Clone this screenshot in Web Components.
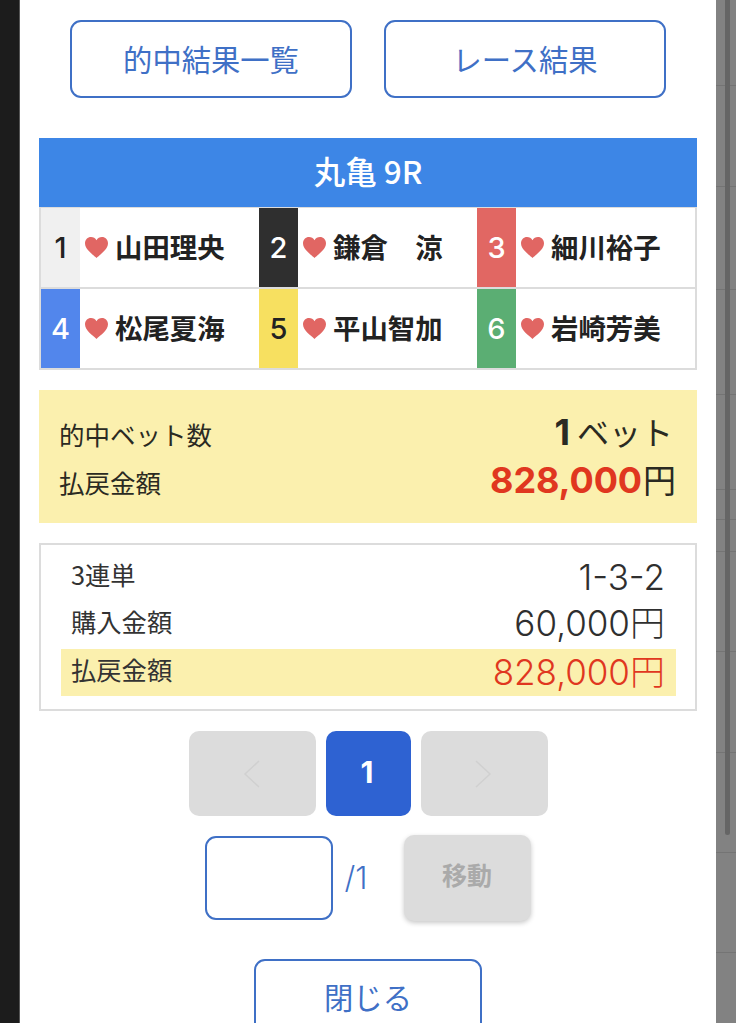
<!DOCTYPE html>
<html lang="ja">
<head>
<meta charset="utf-8">
<title>的中結果</title>
<style>
  html, body { margin: 0; height: 100%; overflow: hidden; background: #1c1c1c; }
  body { font-family: "Noto Sans CJK JP", "Liberation Sans", sans-serif; }
</style>
</head>
<body>
<result-screen>
  <div slot="modal">
    <top-actions></top-actions>
    <race-table venue="丸亀 9R"></race-table>
    <hit-summary bets="1" payout="828,000"></hit-summary>
    <bet-detail type="3連単" combo="1-3-2" stake="60,000" payout="828,000"></bet-detail>
    <page-nav></page-nav>
    <page-jump></page-jump>
    <close-row></close-row>
  </div>
</result-screen>

<script>
const FONT = '"Noto Sans CJK JP", "Liberation Sans", sans-serif';

class ResultScreen extends HTMLElement {
  constructor() {
    super();
    this.attachShadow({ mode: "open" });
    // faint table lines showing through the overlay on the right
    const lines = [86, 101, 103, 105, 95, 30, 32, 100, 101, 100, 100]
      .map((h) => `<i style="height:${h - 1}px"></i>`).join("");
    this.shadowRoot.innerHTML = `
      <style>
        :host { display: flex; width: 736px; height: 1023px; overflow: hidden; background: #1c1c1c; }
        .left { width: 20px; flex: none; background: #1c1c1c; border-right: 1px solid #555; box-sizing: border-box; }
        .modal { width: 696px; flex: none; background: #fff; box-sizing: border-box; padding: 20px 19px 0; }
        .right { width: 20px; flex: none; position: relative; background: #828282; display: flex; flex-direction: column; }
        .right i { display: block; flex: none; border-bottom: 1px solid #747474; }
        .thumb { position: absolute; left: 9px; top: 0; width: 5px; height: 835px; border-radius: 0 0 3px 3px; background: #656565; }
      </style>
      <div class="left"></div>
      <div class="modal"><slot name="modal"></slot></div>
      <div class="right">${lines}<div class="thumb"></div></div>`;
  }
}

class OutlineButton extends HTMLElement {
  constructor() {
    super();
    this.attachShadow({ mode: "open" });
    this.shadowRoot.innerHTML = `
      <style>
        :host {
          display: flex; align-items: center; justify-content: center; box-sizing: border-box;
          width: 282.5px; height: 78px; padding-bottom: 3px; border: 2px solid #3f70c6; border-radius: 11px;
          background: #fff; color: #3f70c6; font: 400 29.3px ${FONT};
        }
      </style>
      <slot></slot>`;
  }
}

class TopActions extends HTMLElement {
  constructor() {
    super();
    this.attachShadow({ mode: "open" });
    this.shadowRoot.innerHTML = `
      <style>:host { display: flex; justify-content: center; gap: 31.5px; }</style>
      <outline-button>的中結果一覧</outline-button>
      <outline-button>レース結果</outline-button>`;
  }
}

class RacerCell extends HTMLElement {
  constructor() {
    super();
    this.attachShadow({ mode: "open" });
    const bg = this.getAttribute("bg");
    const fg = this.getAttribute("fg");
    this.shadowRoot.innerHTML = `
      <style>
        :host { display: flex; align-items: center; background: #fff; height: 79px; }
        .num {
          width: 39px; height: 100%; flex: none; display: flex; align-items: center; justify-content: center;
          background: ${bg}; color: ${fg}; font: 500 29px "Inter", sans-serif;
        }
        svg { width: 23px; height: 21px; margin: 0 7px 0 5px; flex: none; }
        .name { font: 700 27.4px ${FONT}; color: #222; white-space: pre; line-height: 1; padding-bottom: 2px; }
      </style>
      <div class="num">${this.getAttribute("no")}</div>
      <svg viewBox="0 0 23 21"><path fill="#e16663" d="M11.5 21C8 17.6 0 12.6 0 6.3 0 2.6 2.7 0 6 0c2.400 0 4.300 1.200 5.500 3.200C12.700 1.200 14.600 0 17 0c3.300 0 6 2.600 6 6.300 0 6.300-8 11.300-11.500 14.700z"/></svg>
      <span class="name"><slot></slot></span>`;
  }
}

class RaceTable extends HTMLElement {
  constructor() {
    super();
    this.attachShadow({ mode: "open" });
    this.shadowRoot.innerHTML = `
      <style>
        :host { display: block; margin-top: 40px; }
        .head {
          height: 69px; box-sizing: border-box; padding-bottom: 6px; display: flex; align-items: center; justify-content: center;
          background: #3d86e6; color: #fff; font: 500 31.5px ${FONT};
        }
        .grid {
          display: grid; grid-template-columns: repeat(3, 1fr); row-gap: 2px; box-sizing: border-box;
          border: 2px solid #dcdcdc; border-top-width: 1px; background: #dcdcdc;
        }
      </style>
      <div class="head">${this.getAttribute("venue")}</div>
      <div class="grid">
        <racer-cell no="1" bg="#f0f0f0" fg="#222">山田理央</racer-cell>
        <racer-cell no="2" bg="#2f2f2f" fg="#fff">鎌倉　涼</racer-cell>
        <racer-cell no="3" bg="#e16763" fg="#fff">細川裕子</racer-cell>
        <racer-cell no="4" bg="#5286ec" fg="#fff">松尾夏海</racer-cell>
        <racer-cell no="5" bg="#f7e060" fg="#222">平山智加</racer-cell>
        <racer-cell no="6" bg="#5bae73" fg="#fff">岩崎芳美</racer-cell>
      </div>`;
  }
}

class HitSummary extends HTMLElement {
  constructor() {
    super();
    this.attachShadow({ mode: "open" });
    this.shadowRoot.innerHTML = `
      <style>
        :host {
          display: block; margin-top: 20px; height: 133px; box-sizing: border-box; padding: 18px 21px 0 20px;
          background: #fbf0ae; color: #2a2a22;
        }
        .row { display: flex; justify-content: space-between; align-items: center; height: 48px; }
        .label { font: 400 25.5px ${FONT}; position: relative; top: 1px; }
        .val { font: 400 32px ${FONT}; line-height: 1; }
        .count { margin-right: 3px; }
        .bold { font: 700 36px "Inter", sans-serif; margin-right: 7px; }
        .yen { font-size: 33px; }
        .money { font: 700 36px "Inter", sans-serif; color: #e0371f; letter-spacing: -0.1px; margin-right: 1px; }
      </style>
      <div class="row"><span class="label">的中ベット数</span><span class="val count"><span class="bold">${this.getAttribute("bets")}</span>ベット</span></div>
      <div class="row"><span class="label">払戻金額</span><span class="val yen"><span class="money">${this.getAttribute("payout")}</span>円</span></div>`;
  }
}

class DetailRow extends HTMLElement {
  constructor() {
    super();
    this.attachShadow({ mode: "open" });
    this.shadowRoot.innerHTML = `
      <style>
        :host {
          display: flex; justify-content: space-between; align-items: center; height: 46.500px;
          padding: 0 11px 0 10px; color: #2f2f2f;
        }
        :host([hit]) { background: #fbf0ae; color: #e0371f; margin-top: 4px; }
        .label { font: 400 25.3px ${FONT}; color: #333; position: relative; top: -1px; }
        :host([hit]) .label { top: -3px; }
        .val { font: 300 35px "Inter", ${FONT}; line-height: 1; position: relative; top: 2px; }
        :host([hit]) .val { top: 0; }
      </style>
      <span class="label">${this.getAttribute("label")}</span>
      <span class="val"><slot></slot></span>`;
  }
}

class BetDetail extends HTMLElement {
  constructor() {
    super();
    this.attachShadow({ mode: "open" });
    const a = (n) => this.getAttribute(n);
    this.shadowRoot.innerHTML = `
      <style>
        :host {
          display: block; margin-top: 20px; height: 168px; box-sizing: border-box;
          border: 2px solid #dcdcdc; padding: 7px 19px 0 20px;
        }
      </style>
      <detail-row label="${a("type")}">${a("combo")}</detail-row>
      <detail-row label="購入金額">${a("stake")}円</detail-row>
      <detail-row label="払戻金額" hit>${a("payout")}円</detail-row>`;
  }
}

class PageNav extends HTMLElement {
  constructor() {
    super();
    this.attachShadow({ mode: "open" });
    this.shadowRoot.innerHTML = `
      <style>
        :host { display: flex; justify-content: center; gap: 10px; margin-top: 20px; }
        div { height: 85px; border-radius: 10px; display: flex; align-items: center; justify-content: center; box-sizing: border-box; }
        .arrow { width: 127px; background: #dcdcdc; }
        .cur { width: 85px; padding: 0 2px 4px 0; background: #2e62d2; color: #fff; font: 700 30px "Inter", sans-serif; }
        svg { width: 18px; height: 30px; fill: none; stroke: #d0d0d0; stroke-width: 1.500; }
        .next { margin-right: 2px; }
      </style>
      <div class="arrow"><svg viewBox="0 0 18 30"><path d="M16 2 2 15l14 13"/></svg></div>
      <div class="cur">1</div>
      <div class="arrow"><svg class="next" viewBox="0 0 18 30"><path d="M2 2l14 13L2 28"/></svg></div>`;
  }
}

class PageJump extends HTMLElement {
  constructor() {
    super();
    this.attachShadow({ mode: "open" });
    this.shadowRoot.innerHTML = `
      <style>
        :host { display: flex; align-items: flex-start; justify-content: center; margin-top: 19px; height: 86px; padding-right: 1px; }
        input {
          width: 128px; height: 84px; box-sizing: border-box; margin: 1px 0 0; padding: 0;
          border: 2px solid #3f70c6; border-radius: 11px; background: #fff; outline: none;
        }
        .total { width: 71px; box-sizing: border-box; padding: 24px 0 0 12px; color: #3f70c6; font: 300 31px "Inter", sans-serif; }
        button {
          width: 127px; height: 86px; border: 0; border-radius: 10px; padding: 0 0 8px; background: #dcdcdc;
          color: #aaa; font: 700 25px ${FONT}; box-shadow: 0 2px 5px rgba(0, 0, 0, .22);
        }
      </style>
      <input type="text" aria-label="ページ番号">
      <span class="total">/1</span>
      <button>移動</button>`;
  }
}

class CloseRow extends HTMLElement {
  constructor() {
    super();
    this.attachShadow({ mode: "open" });
    this.shadowRoot.innerHTML = `
      <style>
        :host { display: flex; justify-content: center; margin-top: 38px; }
        outline-button { width: 228px; height: 80px; padding-bottom: 7px; }
      </style>
      <outline-button>閉じる</outline-button>`;
  }
}

customElements.define("result-screen", ResultScreen);
customElements.define("outline-button", OutlineButton);
customElements.define("top-actions", TopActions);
customElements.define("racer-cell", RacerCell);
customElements.define("race-table", RaceTable);
customElements.define("hit-summary", HitSummary);
customElements.define("detail-row", DetailRow);
customElements.define("bet-detail", BetDetail);
customElements.define("page-nav", PageNav);
customElements.define("page-jump", PageJump);
customElements.define("close-row", CloseRow);
</script>
</body>
</html>
